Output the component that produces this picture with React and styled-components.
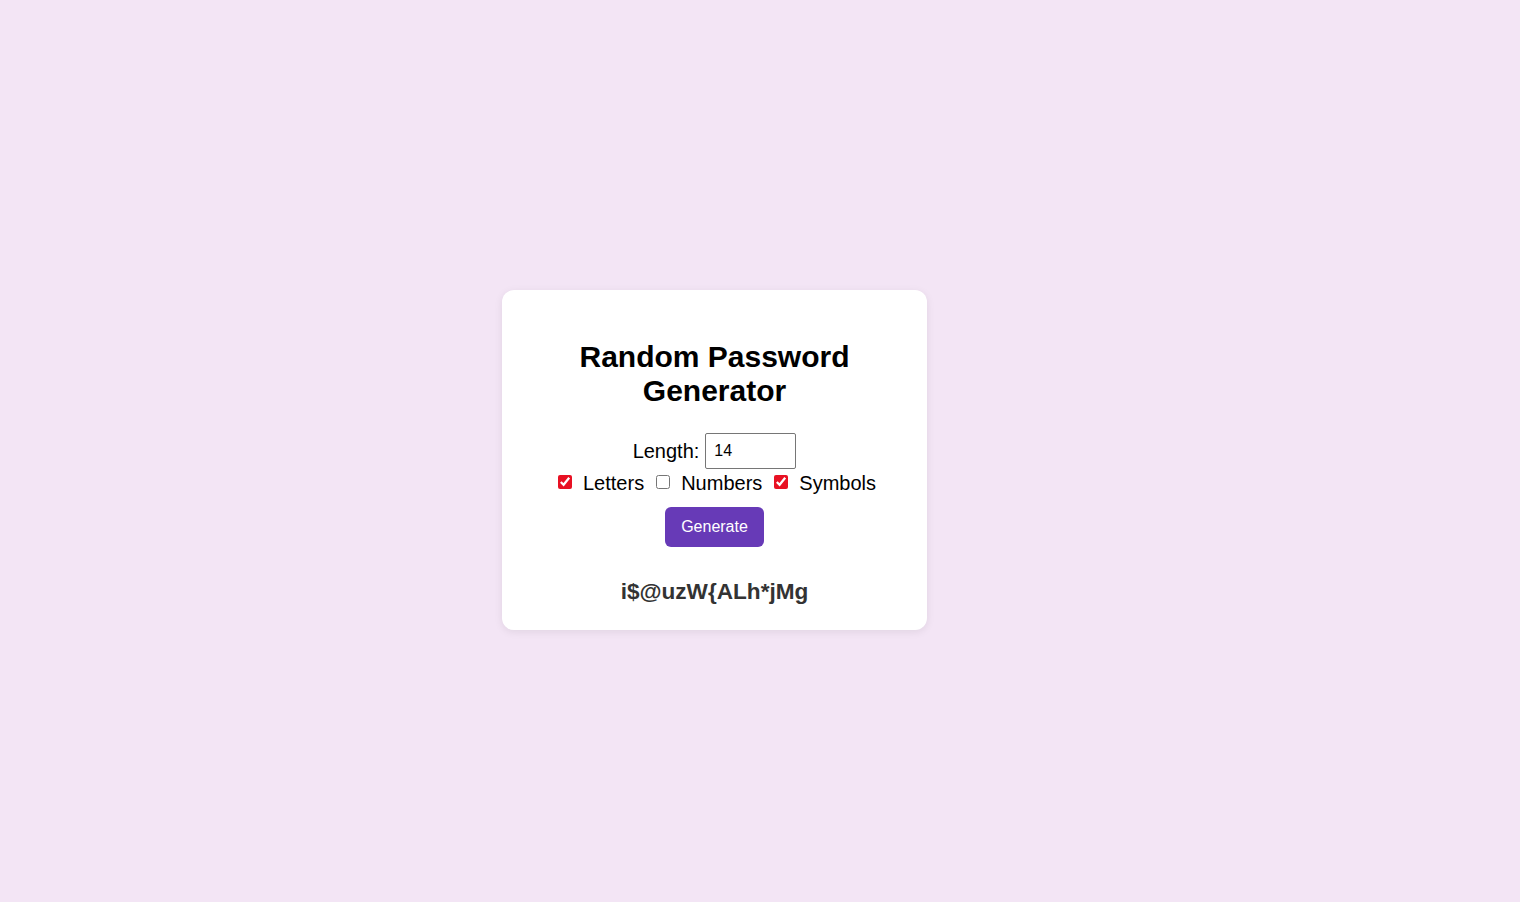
import React, { useState } from "react";
import styled, { createGlobalStyle } from "styled-components";

const GlobalStyle = createGlobalStyle`
  html, body { margin: 0; padding: 0; }
  body {
    background: #f3e5f5;
    font-family: "Liberation Sans", Arial, sans-serif;
  }
`;

const Page = styled.div`
  min-height: 100vh;
  box-sizing: border-box;
  display: flex;
  align-items: center;
  justify-content: center;
  padding: 18px 91px 0 0;
`;

const Card = styled.div`
  width: 425px;
  box-sizing: border-box;
  background: #ffffff;
  border-radius: 12px;
  box-shadow: 0 2px 8px rgba(0, 0, 0, 0.08);
  padding: 50px 40px 25px;
  display: flex;
  flex-direction: column;
  align-items: center;
  text-align: center;
`;

const Title = styled.h1`
  margin: 0 0 25px;
  font-size: 30px;
  line-height: 34px;
  font-weight: 700;
  color: #000;
`;

const Row = styled.div`
  display: flex;
  align-items: center;
  justify-content: center;
  font-size: 20px;
  color: #000;
`;

const LengthInput = styled.input`
  box-sizing: border-box;
  width: 91px;
  height: 36px;
  margin-left: 6px;
  padding: 0 8px;
  border: 1px solid #767676;
  border-radius: 2px;
  font-family: "Liberation Sans", Arial, sans-serif;
  font-size: 16px;
  color: #000;
`;

const Options = styled(Row)`
  margin-top: 3px;
  padding-left: 5px;
`;

const Check = styled.input`
  accent-color: #e81123;
  width: 14px;
  height: 14px;
  margin: 0 11px 4px 0;
`;

const OptLabel = styled.label`
  display: inline-flex;
  align-items: center;
  margin-right: 12px;
  &:last-child { margin-right: 0; }
`;

const Button = styled.button`
  margin-top: 12px;
  height: 40px;
  padding: 0 16px;
  background: #673ab7;
  color: #fff;
  border: none;
  border-radius: 6px;
  font-family: "Liberation Sans", Arial, sans-serif;
  font-size: 16px;
  cursor: pointer;
`;

const Password = styled.div`
  margin-top: 32px;
  font-size: 22.6px;
  font-weight: 700;
  color: #333;
  line-height: 26px;
`;

export default function App() {
  const [len, setLen] = useState("14");
  const [opts, setOpts] = useState({ letters: true, numbers: false, symbols: true });
  const toggle = (k) => setOpts((o) => ({ ...o, [k]: !o[k] }));
  return (
    <>
      <GlobalStyle />
      <Page>
        <Card>
          <Title>Random Password Generator</Title>
          <Row>
            Length:
            <LengthInput type="number" value={len} onChange={(e) => setLen(e.target.value)} />
          </Row>
          <Options>
            <OptLabel>
              <Check type="checkbox" checked={opts.letters} onChange={() => toggle("letters")} />
              Letters
            </OptLabel>
            <OptLabel>
              <Check type="checkbox" checked={opts.numbers} onChange={() => toggle("numbers")} />
              Numbers
            </OptLabel>
            <OptLabel>
              <Check type="checkbox" checked={opts.symbols} onChange={() => toggle("symbols")} />
              Symbols
            </OptLabel>
          </Options>
          <Button>Generate</Button>
          <Password>i$@uzW{"{"}ALh*jMg</Password>
        </Card>
      </Page>
    </>
  );
}
